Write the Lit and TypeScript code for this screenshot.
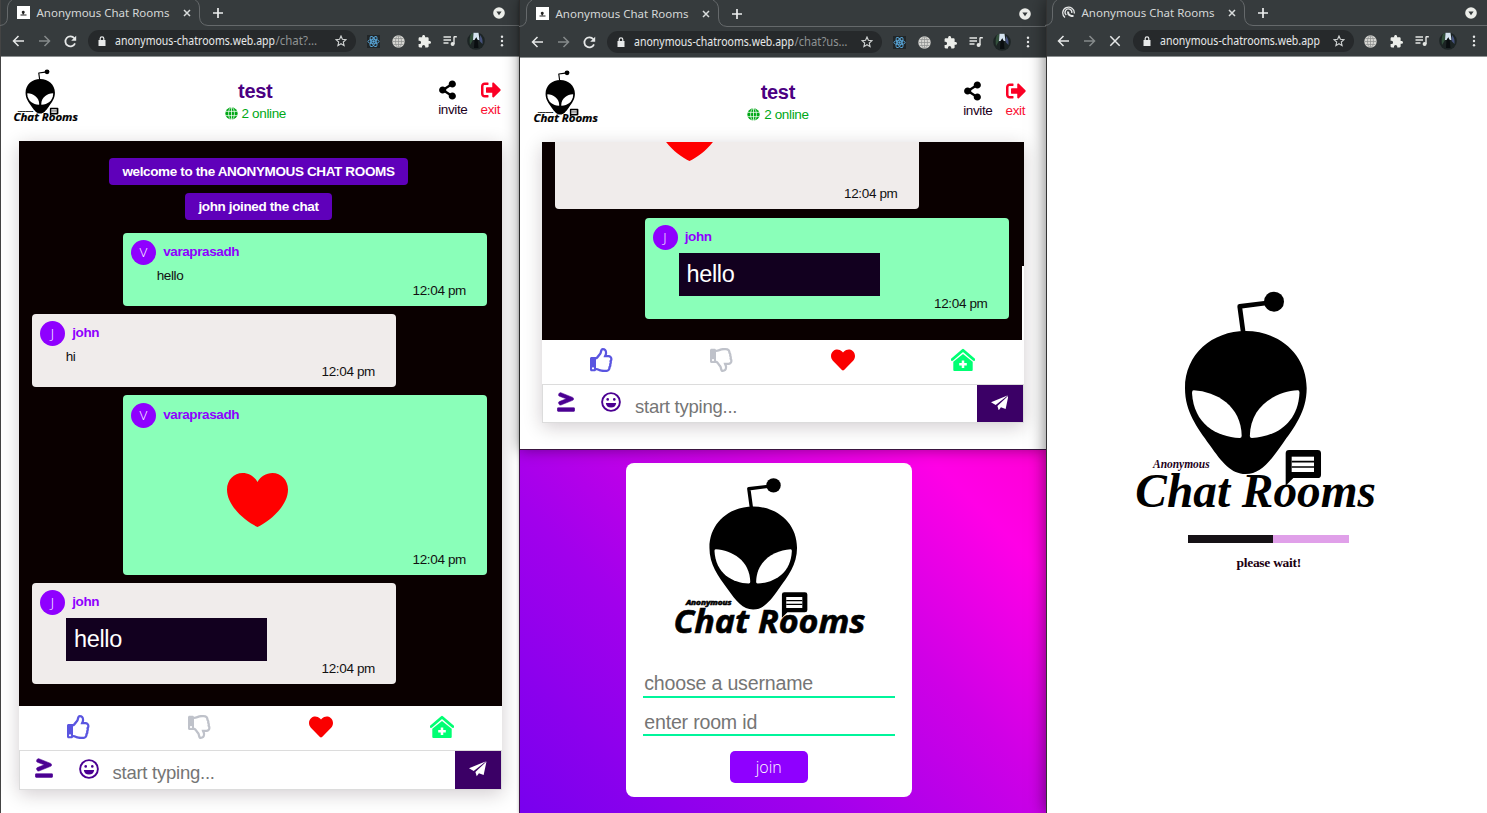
import { LitElement, html, css, svg, nothing } from "lit";
import { customElement, property } from "lit/decorators.js";

/* ---------- icon paths ---------- */
const P = {
  share: "M352 320c-22.608 0-43.387 7.819-59.79 20.895l-102.486-64.054a96.551 96.551 0 0 0 0-41.683l102.486-64.054C308.613 184.181 329.392 192 352 192c53.019 0 96-42.981 96-96S405.019 0 352 0s-96 42.981-96 96c0 7.158.79 14.13 2.276 20.841L155.79 180.895C139.387 167.819 118.608 160 96 160c-53.019 0-96 42.981-96 96s42.981 96 96 96c22.608 0 43.387-7.819 59.79-20.895l102.486 64.054A96.301 96.301 0 0 0 256 416c0 53.019 42.981 96 96 96s96-42.981 96-96-42.981-96-96-96z",
  exit: "M497 273L329 441c-15 15-41 4.5-41-17v-96H152c-13.3 0-24-10.7-24-24v-96c0-13.3 10.7-24 24-24h136V88c0-21.4 25.9-32 41-17l168 168c9.3 9.4 9.3 24.6 0 34zM192 436v-40c0-6.6-5.4-12-12-12H96c-17.7 0-32-14.3-32-32V160c0-17.7 14.3-32 32-32h84c6.6 0 12-5.4 12-12V76c0-6.6-5.4-12-12-12H96c-53 0-96 43-96 96v192c0 53 43 96 96 96h84c6.6 0 12-5.4 12-12z",
  heart: "M462.3 62.6C407.5 15.9 326 24.3 275.7 76.2L256 96.5l-19.7-20.3C186.1 24.3 104.5 15.9 49.7 62.6c-62.8 53.6-66.1 149.8-9.9 207.9l193.5 199.8c12.5 12.9 32.8 12.9 45.3 0l193.5-199.8c56.3-58.1 53-154.3-9.8-207.9z",
  prompt: "M55.22 107.69l175.56 68.09-175.44 68.05c-18.39 6.03-27.88 24.39-21.2 41l12.09 30.08c6.68 16.61 26.99 25.19 45.38 19.15L393.02 214.2c13.77-4.52 22.98-16.61 22.98-30.17v-15.96c0-13.56-9.21-25.65-22.98-30.17L91.3 17.92c-18.29-6-38.51 2.53-45.15 19.06L34.12 66.9c-6.64 16.53 2.81 34.79 21.1 40.79zM424 400H24c-13.25 0-24 10.74-24 24v48c0 13.25 10.75 24 24 24h400c13.25 0 24-10.75 24-24v-48c0-13.26-10.75-24-24-24z",
  plane: "M0 21L51 0L14 29.500ZM19 32.500L52 1L43.500 41L29.500 36L23 45Z",
  thumb: "M466.27 286.69C475.04 271.84 480 256 480 236.85c0-44.015-37.218-85.58-85.82-85.58H357.7c4.92-12.81 8.85-28.13 8.85-46.54C366.55 31.936 328.86 0 271.28 0c-61.607 0-58.093 94.933-71.76 108.6-22.747 22.747-49.615 66.447-68.76 83.4H32c-17.673 0-32 14.327-32 32v240c0 17.673 14.327 32 32 32h64c14.893 0 27.408-10.174 30.978-23.95 44.509 1.001 75.06 39.94 177.802 39.94 7.22 0 15.22.01 22.22.01 77.117 0 111.986-39.423 112.94-95.33 13.319-18.425 20.299-43.122 17.34-66.99 9.854-18.452 13.664-40.343 8.99-62.99zm-61.75 53.83c12.56 21.13 1.26 49.41-13.94 57.57 7.7 48.78-17.608 65.9-53.12 65.9h-37.82c-71.639 0-118.029-37.82-171.64-37.82V240h10.92c28.36 0 67.98-70.89 94.54-97.46 28.36-28.36 18.91-75.63 37.82-94.54 47.27 0 47.27 32.98 47.27 56.73 0 39.17-28.36 56.72-28.36 94.54h103.99c21.11 0 37.73 18.91 37.82 37.82.09 18.9-12.82 37.81-22.27 37.81 13.489 14.555 16.371 45.236-5.21 65.62z",
};

const ring = (n: number, color: string) => html`<svg width=${n} height=${n} viewBox="0 0 16 16">
  <circle cx="8" cy="8" r="7.6" fill=${color}></circle>
  <g fill="none" stroke="var(--cut)" stroke-width=".9">
    <ellipse cx="8" cy="8" rx="3.6" ry="7.6"></ellipse><path d="M8 0V16M.6 5.4H15.4M.6 10.6H15.4"></path>
  </g></svg>`;

/* ---------- brand mark ---------- */
@customElement("brand-logo")
export class BrandLogo extends LitElement {
  @property({ type: Boolean }) serif = false;

  static styles = css`
    :host { display: block; }
    svg { display: block; width: 100%; overflow: visible; }
    .sans { font-family: "Open Sans", "Noto Sans", sans-serif; font-weight: 700; font-style: italic; stroke: #000; stroke-width: 2.5; }
    .serif { font-family: "Liberation Serif", serif; font-weight: 700; font-style: italic; }
  `;

  render() {
    const eye = "M222 331C290 335 365 378 366 468Q366 474 360 474C290 470 222 432 217 338Q217 331 222 331Z";
    return html`<svg viewBox="40 30 815 670">
      <path d="M371 160L360 79L440 69" fill="none" stroke="#000" stroke-width="14" stroke-linejoin="round"></path>
      <circle cx="463" cy="65" r="30"></circle>
      <path d="M378 153C278 153 196 222 196 325C196 395 232 442 270 495C308 549 335 582 378 582C421 582 448 549 486 495C524 442 561 395 561 325C561 222 478 153 378 153Z"></path>
      <path d=${eye} fill="#fff"></path>
      <path d=${eye} fill="#fff" transform="translate(756.5 0) scale(-1 1)"></path>
      ${this.serif
        ? svg`<text class="serif" x="100" y="563" font-size="35" textLength="170" lengthAdjust="spacingAndGlyphs" fill="#1c0020">Anonymous</text>
              <text class="serif" x="47" y="681" font-size="146" textLength="722" lengthAdjust="spacingAndGlyphs">Chat Rooms</text>`
        : svg`<text class="sans" x="98" y="563" font-size="30" textLength="190" lengthAdjust="spacingAndGlyphs">Anonymous</text>
              <text class="sans" x="46" y="680" font-size="136" textLength="800" lengthAdjust="spacingAndGlyphs">Chat Rooms</text>`}
      <path d="M508 510H594Q604 510 604 520V584Q604 594 594 594H521L498 617V520Q498 510 508 510Z"></path>
      <path d="M516 530H583V576H516Z" fill="#fff"></path>
      <path d="M516 545H583M516 561H583" stroke="#000" stroke-width="5"></path>
    </svg>`;
  }
}

/* ---------- browser chrome ---------- */
@customElement("browser-bar")
export class BrowserBar extends LitElement {
  @property() rest = "";
  @property({ type: Number }) restWidth = 0;
  @property({ type: Boolean }) loading = false;

  static styles = css`
    :host {
      display: block; background: #363b3d; color: #d5d8d8; flex: none;
      font-family: "Noto Sans", sans-serif; --cut: #363b3d;
      padding-top: var(--drop, 0px); border-bottom: 1px solid #8d9192;
    }
    svg { display: block; flex: none; }
    .strip { display: grid; grid-template-columns: 208px 1fr; height: 26px; margin-left: var(--shift, 0px); }
    .edge, .tab { grid-area: 1 / 1; }
    .edge { overflow: visible; }
    .tab { display: flex; align-items: center; height: 25px; padding-left: 17px; }
    .title { font-size: 11.5px; line-height: 16px; margin-left: 6.5px; width: 144.5px; white-space: nowrap; }
    .after { display: flex; align-items: center; justify-content: space-between; border-bottom: 1px solid #65696b;
      padding: 0 var(--menu, 13px) 0 4px; height: 25px; }
    .tools { display: flex; align-items: center; height: 30px; padding: 0 var(--end, 5px) 0 6px; margin-left: var(--shift, 0px); }
    .cell { width: 25.7px; display: flex; justify-content: center; flex: none; }
    .omni { flex: 1; min-width: 0; display: flex; align-items: center; height: 22.5px; margin: 0 4px 0 5px; border-radius: 12px;
      background: #26292b; padding: 0 9px 0 10px; }
    .url { flex: 1 1 0; width: 0; min-width: 0; margin-left: 9px; overflow: visible; }
    .dim { fill: #8f9394; }
    text { font-size: 12px; fill: #e8eaea; }
  `;

  render() {
    return html`
      <div class="strip">
        <svg class="edge" width="208" height="26" viewBox="0 0 208 26" fill="none" stroke="#65696b">
          <path d="M0 25.5Q7.5 25 7.5 17V8Q8 2 13 -1M194 -1Q199.500 2 199.500 8V17Q200 25 208 25.500"></path>
        </svg>
        <div class="tab">
          ${this.loading
            ? html`<svg width="13" height="13" viewBox="0 0 13 13" fill="none" stroke="#e4e6e6" stroke-width="1.300">
                <path d="M3 11.500A5.800 5.800 0 1 1 12.300 7.500"></path><path d="M4.300 9A3.400 3.400 0 1 1 9.800 7"></path>
                <path d="M6.200 5.500Q5.500 9 9.500 10H11.500" stroke-width="2"></path></svg>`
            : html`<svg width="13" height="13" viewBox="0 0 13 13"><path fill="#fff" d="M0 0H13V13H0Z"></path>
                <path d="M4.600 6Q6.200 3.600 7.900 6L6.800 8.300H5.700ZM6.300 4L7.200 3.200M3.500 8.600H9.500V9.600H3.500Z" fill="#222"></path></svg>`}
          <span class="title">Anonymous Chat Rooms</span>
          <svg width="12" height="12" viewBox="0 0 12 12"><path d="M3 3L9 9M9 3L3 9" stroke="#d9dcdc" stroke-width="1.500"></path></svg>
        </div>
        <div class="after">
          <svg width="12" height="12" viewBox="0 0 12 12"><path d="M6 1V11M1 6H11" stroke="#eceeee" stroke-width="1.700"></path></svg>
          <svg width="12" height="12" viewBox="0 0 12 12"><circle cx="6" cy="6" r="5.800" fill="#eceeea"></circle><path d="M3.400 4.600H8.600L6 8.300Z" fill="#363b3d"></path></svg>
        </div>
      </div>
      <div class="tools">
        <div class="cell"><svg width="13" height="12" viewBox="0 0 13 12" fill="none" stroke="#e6e8e8" stroke-width="1.500"><path d="M12 6H2M6.500 1L1.500 6L6.500 11"></path></svg></div>
        <div class="cell"><svg width="13" height="12" viewBox="0 0 13 12" fill="none" stroke="#858a8b" stroke-width="1.500"><path d="M1 6H11M6.500 1L11.500 6L6.500 11"></path></svg></div>
        <div class="cell">${this.loading
          ? html`<svg width="12" height="12" viewBox="0 0 12 12"><path d="M1.300 1.300L10.700 10.700M10.700 1.300L1.300 10.700" stroke="#e6e8e8" stroke-width="1.500"></path></svg>`
          : html`<svg width="13" height="13" viewBox="0 0 13 13"><path d="M11 8.300A5 5 0 1 1 10.300 3.200" fill="none" stroke="#e6e8e8" stroke-width="1.800"></path><path d="M12.200 .7V5.800H7.200Z" fill="#e6e8e8"></path></svg>`}</div>
        <div class="omni">
          <svg width="8" height="10" viewBox="0 0 8 10"><path d="M.5 4H7.500V10H.5Z" fill="#e8eaea"></path><path d="M2.200 4.500V2.600A1.800 1.800 0 0 1 5.800 2.600V4.500" fill="none" stroke="#e8eaea" stroke-width="1.200"></path></svg>
          <svg class="url" height="16">
            <text x="0" y="12" textLength="160" lengthAdjust="spacingAndGlyphs">anonymous-chatrooms.web.app</text>
            ${this.rest ? svg`<text class="dim" x="160.500" y="12" textLength=${this.restWidth} lengthAdjust="spacingAndGlyphs">${this.rest}</text>` : nothing}
          </svg>
          <svg width="12" height="12" viewBox="0 0 12 12"><path d="M6 1L7.400 4.300L11 4.600L8.300 7L9.100 10.600L6 8.700L2.900 10.600L3.700 7L1 4.600L4.600 4.300Z" fill="none" stroke="#d0d3d3" stroke-width="1.100"></path></svg>
        </div>
        ${this.loading ? nothing : html`<div class="cell"><svg width="13" height="13" viewBox="0 0 13 13">
          <path d="M0 0H13V13H0Z" fill="#212628"></path><g fill="none" stroke="#5aa9dc" stroke-width=".9">
          <ellipse cx="6.500" cy="6.500" rx="5.600" ry="2.200"></ellipse><ellipse cx="6.500" cy="6.500" rx="5.600" ry="2.200" transform="rotate(60 6.500 6.500)"></ellipse>
          <ellipse cx="6.500" cy="6.500" rx="5.600" ry="2.200" transform="rotate(120 6.500 6.500)"></ellipse></g><circle cx="6.500" cy="6.500" r="1.200" fill="#5aa9dc"></circle></svg></div>`}
        <div class="cell"><svg width="13" height="13" viewBox="0 0 13 13"><circle cx="6.500" cy="6.500" r="6.200" fill="#d6d6d2"></circle>
          <g fill="none" stroke="#8a8d8c" stroke-width=".7"><ellipse cx="6.500" cy="6.500" rx="3" ry="6"></ellipse><path d="M6.500 .5V12.500M.5 6.500H12.500M1.500 3.500H11.500M1.500 9.500H11.500"></path></g></svg></div>
        <div class="cell"><svg width="13" height="13" viewBox="1 1 22 22"><path fill="#eceeea" d="M20.500 11H19V7c0-1.100-.9-2-2-2h-4V3.500C13 2.120 11.880 1 10.500 1S8 2.120 8 3.500V5H4c-1.100 0-1.990.9-1.990 2v3.800H3.500c1.490 0 2.700 1.210 2.700 2.700s-1.210 2.700-2.700 2.700H2V20c0 1.100.9 2 2 2h3.800v-1.500c0-1.490 1.210-2.700 2.700-2.700s2.700 1.210 2.700 2.700V22H17c1.100 0 2-.9 2-2v-4h1.500c1.380 0 2.500-1.120 2.500-2.500S21.880 11 20.500 11z"></path></svg></div>
        <div class="cell"><svg width="14" height="12" viewBox="0 0 14 12"><path d="M.5 2H8M.5 5H8M.5 8H5.500M11 1.500V9M11 1.800H13.800" fill="none" stroke="#e4e6e4" stroke-width="1.400"></path><circle cx="9.600" cy="9" r="2" fill="#e4e6e4"></circle></svg></div>
        <div class="cell"><svg width="18" height="18" viewBox="0 0 18 18"><circle cx="9" cy="9" r="8.800" fill="#1c2424"></circle>
          <path d="M4 2Q2 6 3 13L6 8V1Z" fill="#33503c"></path><path d="M6.500 .8H11.500L12.500 8H10.500L9.300 5L8 8H6Z" fill="#d4e2ee"></path><path d="M13 3Q16 6 15.500 12L12.500 9Z" fill="#46527c"></path><path d="M7.500 8Q9 4.500 10.700 8L11.500 16H7Z" fill="#0a0e10"></path></svg></div>
        <div class="cell"><svg width="4" height="12" viewBox="0 0 4 12" fill="#e6e8e8"><circle cx="2" cy="1.700" r="1.200"></circle><circle cx="2" cy="6" r="1.200"></circle><circle cx="2" cy="10.300" r="1.200"></circle></svg></div>
      </div>`;
  }
}

/* ---------- chat ---------- */
type Entry = { kind: "note" | "msg"; who?: string; text?: string; mine?: boolean; style?: "plain" | "heart" | "block" };

@customElement("chat-page")
export class ChatPage extends LitElement {
  @property({ attribute: false }) entries: Entry[] = [];
  @property({ type: Boolean }) scrolled = false;

  static styles = css`
    :host { display: flex; flex-direction: column; flex: 1; min-height: 0; background: #fff; overflow: hidden;
      font-family: "Liberation Sans", Arial, sans-serif; font-size: 13.500px; letter-spacing: -.36px; line-height: 15px; --cut: #fff; }
    svg { display: block; flex: none; }
    header { display: grid; grid-template-columns: 66px 1fr auto; height: 84px; padding: 0 18.500px 0 13.4px; box-sizing: border-box; flex: none; }
    :host([scrolled]) header { padding: 0 20px 0 12.600px; }
    brand-logo { margin-top: 12px; width: 65.6px; }
    .room { display: flex; flex-direction: column; align-items: center; padding: 22px 7px 0 0; }
    :host([scrolled]) .room { padding-right: 6px; }
    .room b { font-size: 20px; letter-spacing: -.3px; line-height: 24px; color: #4b0082; }
    .online { display: flex; align-items: center; gap: 4px; color: #00a816; margin-top: 3px; }
    .actions { display: flex; gap: 13px; padding-top: 23px; text-align: center; }
    .act { display: flex; flex-direction: column; align-items: flex-start; color: #1c0020; }
    .act svg { height: 20px; margin-bottom: 2px; }
    .red { color: #fb0f33; }
    .panel { flex: 1; min-height: 0; display: flex; flex-direction: column; margin: 0 17px 23.500px 19px;
      box-shadow: 0 4px 18px rgba(30, 0, 20, .2); }
    :host([scrolled]) .panel { margin: 0 22px 26px 21.500px; }
    .log { flex: 1; min-height: 0; background: #0a0000; padding: 17px 15px 0 13px; display: flex; flex-direction: column; gap: 8.300px;
      overflow: hidden; position: relative; }
    :host([scrolled]) .log { justify-content: flex-end; padding-bottom: 21px; }
    .log > * { flex: none; }
    .thumb { position: absolute; right: 0; bottom: 0; width: 2px; height: 74px; background: #fff; }
    .note { align-self: center; background: #5f00ba; color: #fff; font-weight: 700; border-radius: 4px; padding: 6px 13px; margin-right: 2px; letter-spacing: -.37px; }
    .note + .msg { margin-top: 4px; }
    .msg { width: 364px; box-sizing: border-box; background: #f0eceb; border-radius: 4px; padding: 7.500px 8px 8px; color: #111; }
    .mine { align-self: flex-end; background: #8affb9; }
    .head { display: flex; align-items: center; height: 25px; color: #8f00ff; font-weight: 700; margin-bottom: 2.500px; letter-spacing: -.4px; }
    .name { margin: -2px 0 0 7.200px; }
    .pic { width: 25px; height: 25px; border-radius: 50%; background: #8f00ff; color: #fff; display: grid; place-items: center;
      font-family: "Open Sans", sans-serif; font-weight: 300; font-size: 13.500px; letter-spacing: 0; }
    .plain { padding-left: 25.700px; }
    .heart { height: 121.500px; padding: 42.500px 0 0 96px; box-sizing: border-box; }
    .block { margin-left: 26px; width: 201px; height: 43px; box-sizing: border-box; background: #12001f; color: #fff;
      font-size: 23.500px; line-height: 43px; padding-left: 8px; }
    .time { text-align: right; padding-right: 13px; }
    .reacts { display: grid; grid-template-columns: repeat(4, 1fr); height: 44px; place-items: center; background: #fff; padding-bottom: 3px; box-sizing: border-box; flex: none; }
    .entry { display: flex; height: 39.500px; box-sizing: border-box; border: 1px solid #dcdcdc; background: #fff; flex: none; color: #4b0092; }
    .entry .cmd { margin: 7px 0 0 14.500px; }
    .entry .emo { margin: 7.500px 0 0 26px; }
    .ph { flex: 1; font-size: 18.500px; letter-spacing: -.25px; line-height: 20px; color: #757575; padding: 12px 0 0 14px; }
    .send { width: 46px; background: #3b0066; display: flex; justify-content: center; padding-top: 10px; box-sizing: border-box; }
  `;

  private entry(e: Entry) {
    if (e.kind === "note") return html`<div class="note">${e.text}</div>`;
    return html`<div class="msg ${e.mine ? "mine" : ""}">
      <div class="head"><span class="pic">${e.who![0].toUpperCase()}</span><span class="name">${e.who}</span></div>
      ${e.style === "heart"
        ? html`<div class="heart"><svg width="61" height="54" viewBox="0 0 61 54"><path fill="#f00" d="M30.500 54C20 49 0 34 0 16.500C0 7 7 0 15.500 0C22 0 27.500 3.500 30.500 9C33.500 3.500 39 0 45.500 0C54 0 61 7 61 16.500C61 34 41 49 30.500 54Z"></path></svg></div>`
        : html`<div class=${e.style ?? "plain"}>${e.text}</div>`}
      <div class="time">12:04 pm</div>
    </div>`;
  }

  render() {
    return html`
      <header>
        <brand-logo></brand-logo>
        <div class="room"><b>test</b><span class="online">${ring(13, "#00a816")}2 online</span></div>
        <div class="actions">
          <div class="act"><svg width="19" height="20" viewBox="0 -10 448 532"><path d=${P.share} fill="#000"></path></svg>invite</div>
          <div class="act red"><svg width="20" height="20" viewBox="0 0 512 512"><path d=${P.exit} fill="#fb0025"></path></svg>exit</div>
        </div>
      </header>
      <div class="panel">
        <div class="log">${this.entries.map((e) => this.entry(e))}${this.scrolled ? html`<div class="thumb"></div>` : nothing}</div>
        <div class="reacts">
          <svg width="24" height="24" viewBox="0 0 512 512" fill="#5a55e0"><path d=${P.thumb}></path><circle cx="64" cy="432" r="24" fill="#fff"></circle></svg>
          <svg width="24" height="24" viewBox="0 0 512 512" fill="#bfc2ca"><path d=${P.thumb} transform="translate(0 512) scale(1 -1)"></path><circle cx="64" cy="256" r="24" fill="#fff"></circle></svg>
          <svg width="24" height="24" viewBox="0 0 512 512" fill="#fa0000"><path d=${P.heart}></path></svg>
          <svg width="24" height="24" viewBox="0 0 24 24"><path d="M1.200 11.500L12 2.300L22.800 11.500" fill="none" stroke="#00ff73" stroke-width="2.800" stroke-linecap="round" stroke-linejoin="round"></path><path d="M2.300 13.800L12 5.900L21.700 13.800V22Q21.700 23 20.700 23H3.300Q2.300 23 2.300 22Z" fill="#00ff73"></path><path d="M12 12.500V20M8.200 16.200H15.800" stroke="#fff" stroke-width="2.500"></path></svg>
        </div>
        <div class="entry">
          <svg class="cmd" width="18" height="20" viewBox="0 0 448 512" fill="currentColor" stroke="currentColor" stroke-width="14"><path d=${P.prompt}></path></svg>
          <svg class="emo" width="20" height="20" viewBox="0 0 20 20"><circle cx="10" cy="10" r="8.900" fill="none" stroke="currentColor" stroke-width="1.900"></circle><circle cx="6.700" cy="7.400" r="1.300" fill="currentColor"></circle><circle cx="13.300" cy="7.400" r="1.300" fill="currentColor"></circle><path d="M4.800 11H15.200Q14.600 15.600 10 15.600Q5.400 15.600 4.800 11Z" fill="currentColor"></path></svg>
          <div class="ph">start typing...</div>
          <div class="send"><svg width="17.500" height="15.500" viewBox="0 0 52 45" fill="#fff"><path d=${P.plane}></path></svg></div>
        </div>
      </div>`;
  }
}

/* ---------- page ---------- */
@customElement("app-root")
export class AppRoot extends LitElement {
  static styles = css`
    :host { display: grid; grid-template-columns: 519px 526.500px 441.500px; width: 1487px; height: 813px; overflow: hidden; background: #fff;
      font-family: "Liberation Sans", Arial, sans-serif; }
    .win { display: flex; flex-direction: column; min-height: 0; background: #fff; box-sizing: border-box; }
    .first { --menu: 14px; border-left: 1px solid #444; }
    .first browser-bar { --end: 4.500px; --shift: -1px; }
    .first chat-page { margin-left: -1px; background: none; }
    .middle { display: flex; flex-direction: column; min-height: 0; position: relative; z-index: 1; box-shadow: 0 0 3px rgba(0, 0, 0, .3); }
    .upper { height: 450px; flex: none; position: relative; z-index: 1; border-left: 1px solid #2b2b2b; border-bottom: 1px solid #3a1540;
      box-shadow: 0 0 14px rgba(0, 0, 0, .4); }
    .upper browser-bar { --drop: 1px; --shift: -1px; --menu: 15px; --end: 5px; }
    .third { position: relative; z-index: 2; border-left: 1px solid #333; box-shadow: 0 0 16px rgba(0, 0, 0, .55); }
    .third browser-bar { --shift: -1.500px; --menu: 10.500px; --end: .500px; }
    .login { flex: 1; display: flex; justify-content: center; padding: 13px 28px 0 0; box-sizing: border-box; border-left: 1px solid #40104a;
      background: linear-gradient(45deg, #7800ee 0%, #a200ec 35%, #cf00e6 62%, #ff00e6 86%, #ff00d4 100%); }
    .card { width: 286px; height: 334px; border-radius: 8px; background: #fff; box-sizing: border-box; padding: 14px 17px 0; }
    .card brand-logo { width: 195.600px; margin-left: 29px; }
    .field { height: 38.800px; box-sizing: border-box; border-bottom: 2px solid #00f59b; color: #757575; font-size: 19.600px; letter-spacing: -.2px; line-height: 22px; padding: 13.500px 0 0 1.500px; }
    .first-field { margin-top: 21px; }
    .join { width: 77.500px; height: 32px; margin: 15px auto 0; border-radius: 5px; background: #8f00ff; color: #fff; display: grid; place-items: center;
      font: 300 16px/20px "Open Sans", sans-serif; }
    .loader { flex: 1; display: flex; flex-direction: column; align-items: center; padding-top: 233px; }
    .loader brand-logo { width: 271.700px; margin-left: 3.500px; }
    .bar { width: 161px; height: 8px; background: #e0a0e9; margin: 21.500px 0 0 3.500px; }
    .fill { height: 100%; background: #161216; }
    .wait { font: 700 13.500px/16px "Liberation Serif", serif; letter-spacing: -.28px; color: #1c0010; margin: 12px 0 0 4px; }
  `;

  private left: Entry[] = [
    { kind: "note", text: "welcome to the ANONYMOUS CHAT ROOMS" },
    { kind: "note", text: "john joined the chat" },
    { kind: "msg", who: "varaprasadh", text: "hello", mine: true },
    { kind: "msg", who: "john", text: "hi" },
    { kind: "msg", who: "varaprasadh", style: "heart", mine: true },
    { kind: "msg", who: "john", text: "hello", style: "block" },
  ];
  private right: Entry[] = [
    { kind: "msg", who: "varaprasadh", style: "heart" },
    { kind: "msg", who: "john", text: "hello", style: "block", mine: true },
  ];

  render() {
    const progress = 85 / 161;
    return html`
      <section class="win first">
        <browser-bar rest="/chat?…" .restWidth=${41.5}></browser-bar>
        <chat-page .entries=${this.left}></chat-page>
      </section>
      <div class="middle">
        <section class="win upper">
          <browser-bar rest="/chat?us…" .restWidth=${53}></browser-bar>
          <chat-page scrolled .entries=${this.right}></chat-page>
        </section>
        <section class="login">
          <div class="card">
            <brand-logo></brand-logo>
            <div class="field first-field">choose a username</div>
            <div class="field">enter room id</div>
            <div class="join">join</div>
          </div>
        </section>
      </div>
      <section class="win third">
        <browser-bar loading></browser-bar>
        <div class="loader">
          <brand-logo serif></brand-logo>
          <div class="bar"><div class="fill" style="width:${progress * 100}%"></div></div>
          <div class="wait">please wait!</div>
        </div>
      </section>`;
  }
}
